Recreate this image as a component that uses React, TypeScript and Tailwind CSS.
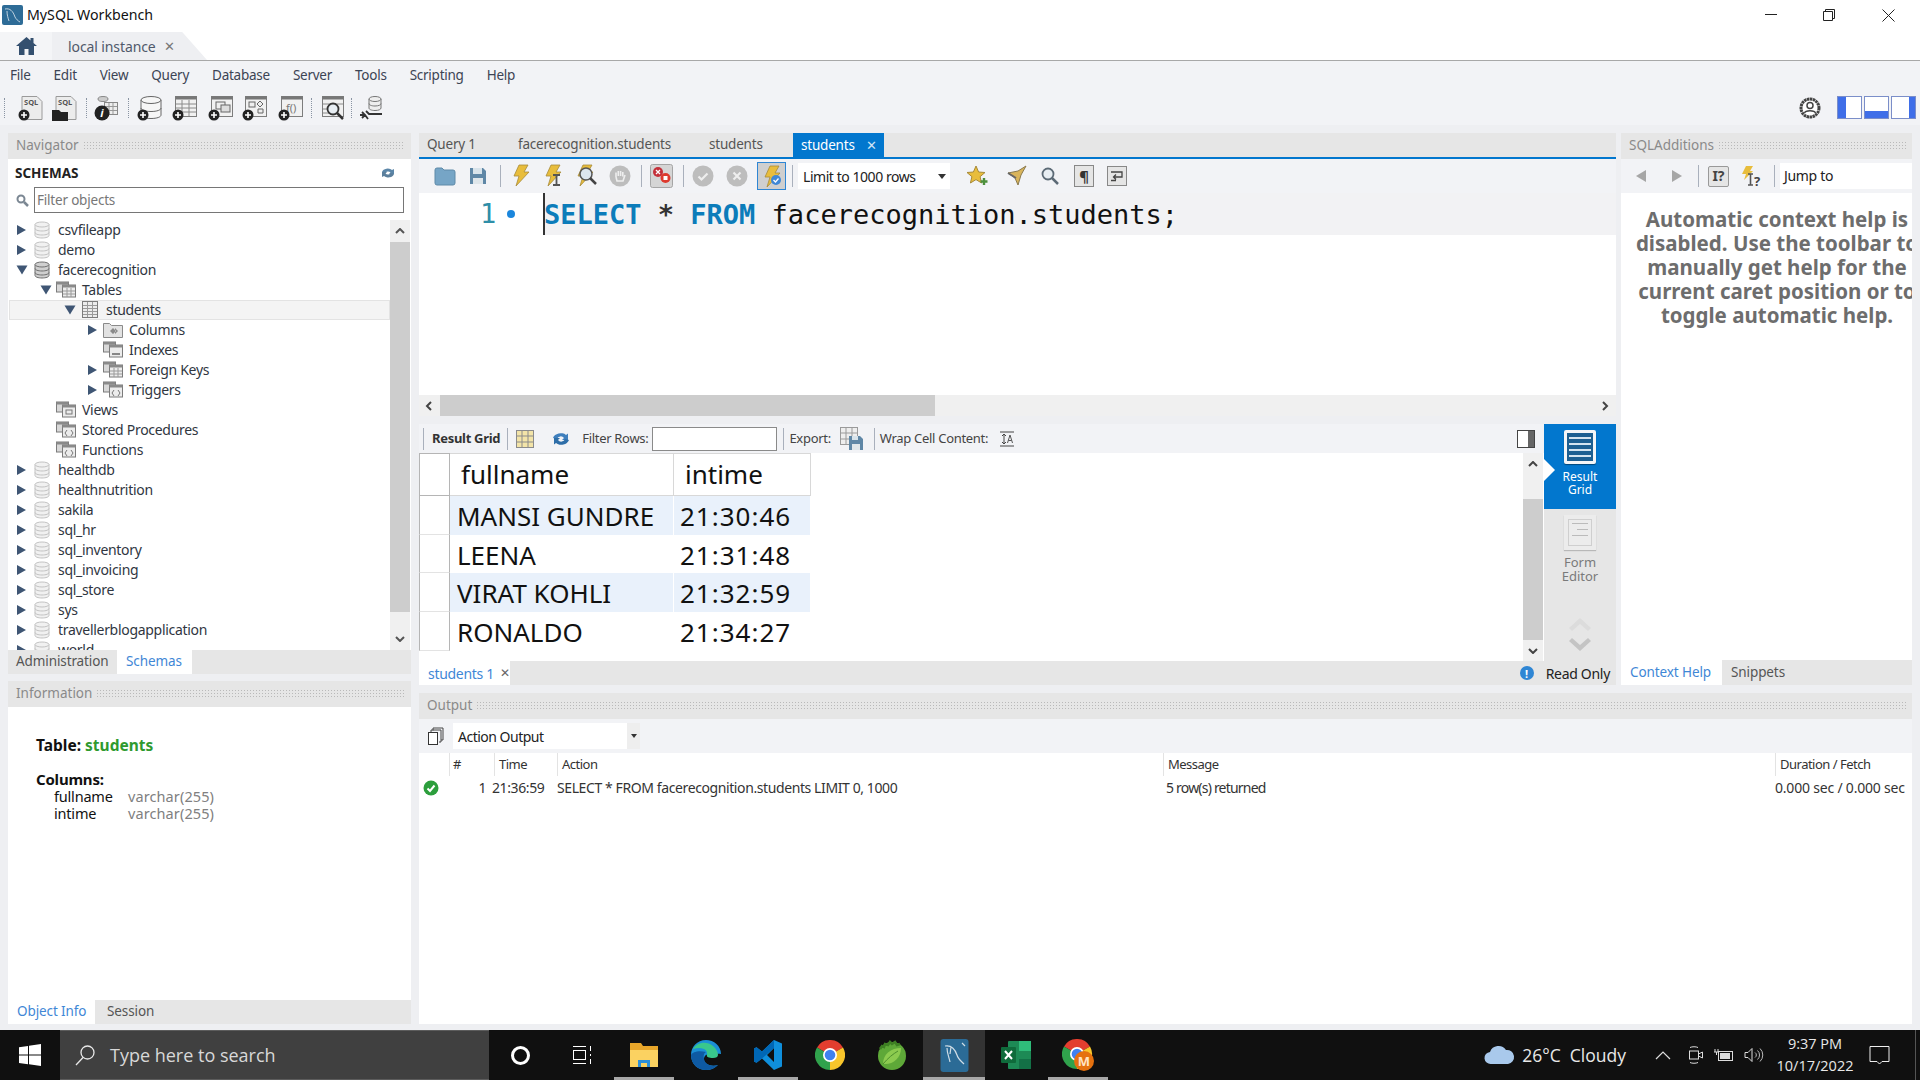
import type { ReactNode } from "react";

// shared bits
const Dots = () => (
    <div className="flex-1 h-[9px] ml-[4px] bg-[radial-gradient(circle,#b9b9b9_1px,transparent_1px)] bg-[length:3px_3px]" />
);

const PanelHeader = ({ title }: { title: string }) => (
    <div className="h-[26px] shrink-0 bg-[#e6e6e6] flex items-center pl-[8px] pr-[6px] pb-[2px] text-[13.5px] text-[#8a8a8a]">
        <span>{title}</span>
        <Dots />
    </div>
);

const Sep = ({ ml, mr }: { ml: string; mr?: string }) => (
    <div className={`w-px h-[22px] bg-[#a9b0bc] shrink-0 ${ml} ${mr ?? ""}`} />
);

const Icon = ({ w = 26, h = 26, children, className = "" }: { w?: number; h?: number; children: ReactNode; className?: string }) => (
    <svg width={w} height={h} viewBox={`0 0 ${w} ${h}`} className={`shrink-0 ${className}`}>
        {children}
    </svg>
);

const Plus = ({ x = 6, y = 20 }: { x?: number; y?: number }) => (
    <g>
        <circle cx={x} cy={y} r="5.5" fill="#222" />
        <path d={`M${x - 3} ${y}h6M${x} ${y - 3}v6`} stroke="#fff" strokeWidth="1.6" />
    </g>
);

const SheetWin = ({ children }: { children?: ReactNode }) => (
    <g>
        <rect x="3.5" y="1.5" width="21" height="20" fill="#f1f1f1" stroke="#7d7d7d" />
        <rect x="3.5" y="1.5" width="21" height="3" fill="#777" />
        {children}
    </g>
);

const Bolt = ({ x = 0 }: { x?: number }) => (
    <path transform={`translate(${x} 0)`} d="M9 2h9l-4 7h5L6 23l3-10H4z" fill="#e8bd3c" stroke="#a78a3a" strokeWidth="0.8" />
);

const Triangle = ({ open }: { open?: boolean }) =>
    open ? (
        <svg width="12" height="10" viewBox="0 0 12 10" className="shrink-0">
            <path d="M0.5 0.5h11L6 9.5z" fill="#3f5674" />
        </svg>
    ) : (
        <svg width="12" height="12" viewBox="0 0 12 12" className="shrink-0">
            <path d="M1 1v10l9-5z" fill="#3f5674" />
        </svg>
    );

const DbIcon = ({ dark }: { dark?: boolean }) => {
    const s = dark ? "#6f6f6f" : "#c3c3c3";
    const f = dark ? "#cfcfcf" : "#f1f1f1";
    return (
        <Icon w={16} h={18}>
            <path d="M1 3.5v11c0 1.4 3 2.5 7 2.5s7-1.1 7-2.5v-11" fill={f} stroke={s} />
            <ellipse cx="8" cy="3.5" rx="7" ry="2.5" fill={f} stroke={s} />
            <path d="M1 7.5c0 1.4 3 2.5 7 2.5s7-1.1 7-2.5M1 11.5c0 1.4 3 2.5 7 2.5s7-1.1 7-2.5" fill="none" stroke={s} />
        </Icon>
    );
};

const GroupIcon = ({ kind }: { kind?: string }) => (
    <Icon w={20} h={18}>
        <rect x="0.5" y="1" width="12" height="10" fill="#d8d8d8" stroke="#7b7b7b" />
        <rect x="0.5" y="1" width="12" height="2.5" fill="#8a8a8a" />
        <rect x="6.5" y="4" width="13" height="12" fill="#ececec" stroke="#7b7b7b" />
        <rect x="6.5" y="4" width="13" height="2.5" fill="#8a8a8a" />
        {kind === "grid" && <path d="M7 10h12M7 13h12M11 7v9M15 7v9" stroke="#9a9a9a" />}
        {kind === "code" && <path d="M11 9l-2 3 2 3M15 9l2 3-2 3" fill="none" stroke="#777" />}
        {kind === "view" && <rect x="10" y="9" width="6" height="4" fill="none" stroke="#777" />}
        {kind === "index" && <path d="M9 13h8" stroke="#666" strokeWidth="1.5" />}
    </Icon>
);

const ColumnsIcon = () => (
    <Icon w={20} h={18}>
        <path d="M0.5 2.5h6l2 2h11v12h-19z" fill="#e2e2e2" stroke="#8a8a8a" />
        <path d="M7 10l3-3v6zM13 10l-3-3v6zM12 7l3 3-3 3z" fill="#8a8a8a" />
    </Icon>
);

const TableIcon = () => (
    <Icon w={17} h={18}>
        <rect x="0.5" y="0.5" width="15" height="16" fill="#ececec" stroke="#7c7c7c" />
        <path d="M1 4.5h14M1 7.5h14M1 10.5h14M1 13.5h14M5.5 1v15M10.5 1v15" stroke="#9a9a9a" />
    </Icon>
);

type Row = { label: string; depth: number; arrow?: "open" | "closed"; icon: "db" | "dbDark" | "grid" | "table" | "cols" | "index" | "fk" | "trig" | "view" | "code"; active?: boolean };

const rows: Row[] = [
    { label: "csvfileapp", depth: 0, arrow: "closed", icon: "db" },
    { label: "demo", depth: 0, arrow: "closed", icon: "db" },
    { label: "facerecognition", depth: 0, arrow: "open", icon: "dbDark" },
    { label: "Tables", depth: 1, arrow: "open", icon: "grid" },
    { label: "students", depth: 2, arrow: "open", icon: "table", active: true },
    { label: "Columns", depth: 3, arrow: "closed", icon: "cols" },
    { label: "Indexes", depth: 3, icon: "index" },
    { label: "Foreign Keys", depth: 3, arrow: "closed", icon: "fk" },
    { label: "Triggers", depth: 3, arrow: "closed", icon: "trig" },
    { label: "Views", depth: 1, icon: "view" },
    { label: "Stored Procedures", depth: 1, icon: "code" },
    { label: "Functions", depth: 1, icon: "code" },
    { label: "healthdb", depth: 0, arrow: "closed", icon: "db" },
    { label: "healthnutrition", depth: 0, arrow: "closed", icon: "db" },
    { label: "sakila", depth: 0, arrow: "closed", icon: "db" },
    { label: "sql_hr", depth: 0, arrow: "closed", icon: "db" },
    { label: "sql_inventory", depth: 0, arrow: "closed", icon: "db" },
    { label: "sql_invoicing", depth: 0, arrow: "closed", icon: "db" },
    { label: "sql_store", depth: 0, arrow: "closed", icon: "db" },
    { label: "sys", depth: 0, arrow: "closed", icon: "db" },
    { label: "travellerblogapplication", depth: 0, arrow: "closed", icon: "db" },
    { label: "world", depth: 0, arrow: "closed", icon: "db" },
];

const indent = ["pl-[7px]", "pl-[31px]", "pl-[55px]", "pl-[78px]"];

function TreeRow({ row }: { row: Row }) {
    const { label, depth, arrow, icon, active } = row;
    return (
        <div className={`h-[20px] shrink-0 flex items-center ${indent[depth]} ${active ? "bg-[#f4f4f4] ring-1 ring-inset ring-[#e3e3e3]" : ""}`}>
            <div className="w-[16px] flex items-center shrink-0">
                {arrow === "open" && <Triangle open />}
                {arrow === "closed" && <Triangle />}
            </div>
            <div className={icon === "db" || icon === "dbDark" || icon === "table" ? "w-[26px] shrink-0 pl-[2px]" : "w-[26px] shrink-0"}>
                {icon === "db" && <DbIcon />}
                {icon === "dbDark" && <DbIcon dark />}
                {icon === "table" && <TableIcon />}
                {icon === "cols" && <ColumnsIcon />}
                {icon === "grid" && <GroupIcon kind="grid" />}
                {icon === "index" && <GroupIcon kind="index" />}
                {icon === "fk" && <GroupIcon kind="grid" />}
                {icon === "trig" && <GroupIcon kind="code" />}
                {icon === "view" && <GroupIcon kind="view" />}
                {icon === "code" && <GroupIcon kind="code" />}
            </div>
            <span className="text-[14px] leading-[20px] tracking-[-0.3px] text-[#30363f] whitespace-nowrap">{label}</span>
        </div>
    );
}

function Navigator() {
    return (
        <div className="w-[403px] shrink-0 flex flex-col">
            <PanelHeader title="Navigator" />
            <div className="bg-white h-[61px] shrink-0 px-[7px] pt-[5px]">
                <div className="flex items-center justify-between pr-[8px] h-[18px]">
                    <span className="text-[13.5px] font-bold text-[#222]">SCHEMAS</span>
                    <Icon w={16} h={14}>
                        <path d="M2 6a6 5 0 0 1 10-2l2-1v5h-5l1.500-1.500A3.500 3 0 0 0 5 7z" fill="#5b86a8" />
                        <path d="M14 8a6 5 0 0 1-10 2l-2 1V6h5L5.500 7.500A3.500 3 0 0 0 11 7z" fill="#5b7f9c" />
                    </Icon>
                </div>
                <div className="flex items-center mt-[5px]">
                    <Icon w={16} h={14} className="mr-[3px] ml-[0px]">
                        <circle cx="6" cy="6" r="3.500" fill="none" stroke="#7b8793" strokeWidth="2" />
                        <path d="M9 9l4 4" stroke="#7b8793" strokeWidth="2.500" />
                    </Icon>
                    <div className="h-[26px] w-[370px] border border-[#767676] bg-white text-[13.5px] tracking-[-0.2px] text-[#777] pl-[2px] leading-[24px]">Filter objects</div>
                </div>
            </div>
            <div className="h-[430px] shrink-0 bg-white flex overflow-hidden">
                <div className="flex-1 flex flex-col overflow-hidden pl-px">
                    {rows.map((r) => (
                        <TreeRow key={r.label} row={r} />
                    ))}
                </div>
                <div className="w-[20px] mr-px shrink-0 flex flex-col bg-[#f0f0f0]">
                    <div className="h-[22px] flex items-center justify-center">
                        <Icon w={10} h={6}>
                            <path d="M1 5l4-4 4 4" fill="none" stroke="#555" strokeWidth="2" />
                        </Icon>
                    </div>
                    <div className="h-[370px] bg-[#cdcdcd]" />
                    <div className="flex-1 flex items-end justify-center pb-[8px]">
                        <Icon w={10} h={6}>
                            <path d="M1 1l4 4 4-4" fill="none" stroke="#555" strokeWidth="2" />
                        </Icon>
                    </div>
                </div>
            </div>
            <div className="h-[24px] shrink-0 bg-[#e6e6e6] flex text-[13.5px] tracking-[-0.1px] leading-[23px]">
                <div className="w-[109px] pl-[8px] text-[#555]">Administration</div>
                <div className="w-[75px] bg-white pl-[9px] text-[#3f87d6]">Schemas</div>
            </div>
            <div className="h-[7px] shrink-0" />
            <PanelHeader title="Information" />
            <div className="flex-1 bg-white pl-[28px] pt-[28px] text-[14.5px] tracking-[-0.2px] text-[#111]">
                <div className="font-bold text-[15.5px] leading-[20px] tracking-normal">
                    Table: <span className="text-[#2f9a2f]">students</span>
                </div>
                <div className="font-bold text-[15px] leading-[18px] mt-[15px]">Columns:</div>
                <div className="flex leading-[16.500px] pl-[18px]">
                    <div className="w-[74px]">
                        <div>fullname</div>
                        <div>intime</div>
                    </div>
                    <div className="text-[#808080] tracking-[0.1px]">
                        <div>varchar(255)</div>
                        <div>varchar(255)</div>
                    </div>
                </div>
            </div>
            <div className="h-[24px] shrink-0 bg-[#e6e6e6] flex text-[13.5px] tracking-[-0.1px] leading-[23px]">
                <div className="w-[87px] bg-white pl-[9px] text-[#3f87d6]">Object Info</div>
                <div className="pl-[12px] text-[#555]">Session</div>
            </div>
        </div>
    );
}

function QueryToolbar() {
    return (
        <div className="h-[34px] shrink-0 bg-[#f2f3f6] flex items-center">
            <Icon w={22} h={20} className="ml-[15px]">
                <path d="M1 4a2 2 0 0 1 2-2h5l2 2h9a2 2 0 0 1 2 2v11a2 2 0 0 1-2 2H3a2 2 0 0 1-2-2z" fill="#76a5c6" stroke="#5e8aa8" />
            </Icon>
            <Icon w={18} h={20} className="ml-[13px]">
                <path d="M1 2h13l3 3v13H1z" fill="#5f87a6" />
                <rect x="4" y="2" width="9" height="6" fill="#d8e3ea" />
                <rect x="4" y="12" width="10" height="6" fill="#dfe6ea" />
            </Icon>
            <Sep ml="ml-[13px]" />
            <Icon w={22} h={26} className="ml-[9px]">
                <Bolt />
            </Icon>
            <Icon w={22} h={26} className="ml-[10px]">
                <Bolt />
                <path d="M11 12h7M14.500 12v10M11 22h7" stroke="#555" strokeWidth="1.800" fill="none" />
            </Icon>
            <Icon w={24} h={26} className="ml-[10px]">
                <Bolt />
                <circle cx="12" cy="11" r="6" fill="#dbe5ee" stroke="#555" strokeWidth="1.500" />
                <path d="M16 15l6 6" stroke="#444" strokeWidth="2.500" />
            </Icon>
            <Icon w={22} h={22} className="ml-[11px]">
                <circle cx="11" cy="11" r="10.500" fill="#bdbdbd" />
                <path d="M7 12V7.500M9.300 11V6M11.600 11V6M13.800 11.500V7M7 12l1 4h6l2-6" stroke="#eee" strokeWidth="1.600" fill="none" />
            </Icon>
            <Sep ml="ml-[10px]" />
            <Icon w={23} h={24} className="ml-[8px]">
                <rect x="0.500" y="0.500" width="22" height="23" rx="2" fill="#d5d5d5" stroke="#a5a5a5" />
                <circle cx="8" cy="8" r="5" fill="#c4303a" />
                <circle cx="15.500" cy="14" r="5" fill="#dd3a2e" />
                <path d="M6 6l4 4M10 6l-4 4" stroke="#fff" strokeWidth="1.300" />
                <rect x="13.500" y="12" width="4" height="4" fill="#fff" />
            </Icon>
            <Sep ml="ml-[10px]" />
            <Icon w={22} h={22} className="ml-[8px]">
                <circle cx="11" cy="11" r="10.500" fill="#bdbdbd" />
                <path d="M6.500 11.500l3 3 6-6" stroke="#eee" strokeWidth="2.200" fill="none" />
            </Icon>
            <Icon w={22} h={22} className="ml-[12px]">
                <circle cx="11" cy="11" r="10.500" fill="#bdbdbd" />
                <path d="M7.500 7.500l7 7M14.500 7.500l-7 7" stroke="#eee" strokeWidth="2.200" />
            </Icon>
            <div className="ml-[9px] w-[29px] h-[28px] border border-[#2f86d4] bg-[#cfcfcf] flex items-center justify-center shrink-0">
                <Icon w={22} h={24}>
                    <Bolt />
                    <circle cx="15" cy="16" r="5" fill="#3f87d6" />
                    <path d="M12.500 16l2 2 3-3.500" stroke="#fff" strokeWidth="1.300" fill="none" />
                </Icon>
            </div>
            <Sep ml="ml-[6px]" />
            <div className="ml-[5px] w-[152px] h-[26px] bg-white flex items-center justify-between pl-[5px] pr-[4px] shrink-0">
                <span className="text-[14px] text-[#222] tracking-[-0.45px]">Limit to 1000 rows</span>
                <Icon w={8} h={5}>
                    <path d="M0 0h8L4 5z" fill="#333" />
                </Icon>
            </div>
            <Icon w={24} h={24} className="ml-[16px]">
                <path d="M10 2l2.600 6 6.400.5-4.900 4.200 1.500 6.300L10 15.600 4.400 19l1.500-6.300L1 8.500 7.400 8z" fill="#e8bd3c" stroke="#a78a3a" />
                <path d="M18 14v7M14.500 17.500h7" stroke="#4d8f3c" strokeWidth="2.400" />
            </Icon>
            <Icon w={22} h={22} className="ml-[16px]">
                <path d="M2 8l10-2 8-5-5 9-3 10-3-7z" fill="#d9b45a" stroke="#8a7a4f" />
                <path d="M2 8l8 5" stroke="#666" strokeWidth="2" />
            </Icon>
            <Icon w={20} h={20} className="ml-[12px]">
                <circle cx="8" cy="8" r="5.500" fill="#e8eef3" stroke="#5c6a76" strokeWidth="1.800" />
                <path d="M12 12l6 6" stroke="#5c6a76" strokeWidth="2.500" />
            </Icon>
            <div className="ml-[14px] w-[20px] h-[22px] border border-[#888] bg-[#e5e5e5] flex items-center justify-center shrink-0 text-[15px] font-bold text-[#333] leading-none">¶</div>
            <div className="ml-[13px] w-[20px] h-[20px] border border-[#888] bg-[#e5e5e5] flex items-center justify-center shrink-0">
                <Icon w={14} h={12}>
                    <path d="M1 2h11v5H4M6 4.500L3.500 7 6 9.500M1 10.500h5" stroke="#444" strokeWidth="1.300" fill="none" />
                </Icon>
            </div>
        </div>
    );
}

function Editor() {
    return (
        <div className="h-[202px] shrink-0 bg-white">
            <div className="h-[42px] flex">
                <div className="w-[124px] flex items-center shrink-0">
                    <span className="ml-[61px] font-['DejaVu_Sans_Mono',monospace] text-[27px] text-[#2f8ea8]">1</span>
                    <div className="ml-[11px] w-[8px] h-[8px] rounded-full bg-[#1b86dc]" />
                </div>
                <div className="flex-1 flex items-center bg-[#f2f2f4] border-l-2 border-[#333] pt-[2px] font-['DejaVu_Sans_Mono',monospace] text-[27px] whitespace-pre text-[#111]">
                    <span className="font-bold text-[#0c7cba] -ml-px">SELECT</span>
                    <span className="font-bold text-[#333]"> * </span>
                    <span className="font-bold text-[#0c7cba]">FROM</span>
                    <span> facerecognition.students;</span>
                </div>
            </div>
        </div>
    );
}

const headCell = "flex items-center border-b border-r border-[#d8d8d8] h-[43px] text-[26px] text-[#111]";

const gridRows = [
    ["MANSI GUNDRE", "21:30:46"],
    ["LEENA", "21:31:48"],
    ["VIRAT KOHLI", "21:32:59"],
    ["RONALDO", "21:34:27"],
];

function ResultGrid() {
    return (
        <div className="flex-1 h-[198px] bg-white overflow-hidden">
            <div className="flex">
                <div className="w-[31px] h-[43px] border-l border-t border-r border-b border-[#b5b5b5] shrink-0" />
                <div className={`w-[224px] pl-[11px] border-t-[#d8d8d8] border-t ${headCell}`}>fullname</div>
                <div className={`w-[137px] pl-[11px] border-t-[#d8d8d8] border-t ${headCell}`}>intime</div>
            </div>
            {gridRows.map((r, i) => (
                <div key={r[0]} className="flex h-[38.700px]">
                    <div className="w-[31px] border-l border-r border-b border-l-[#b5b5b5] border-r-[#b5b5b5] border-b-[#e3e3e3] shrink-0" />
                    <div className={`w-[223px] pl-[7px] pt-[2px] text-[26px] text-[#111] flex items-center mr-px ${i % 2 === 0 ? "bg-[#e9f1fb]" : ""}`}>{r[0]}</div>
                    <div className={`w-[136px] pl-[6px] pt-[2px] text-[26px] tracking-[1px] text-[#111] flex items-center ${i % 2 === 0 ? "bg-[#e9f1fb]" : ""}`}>{r[1]}</div>
                </div>
            ))}
        </div>
    );
}

function ResultToolbar() {
    return (
        <div className="h-[29px] shrink-0 bg-[#f2f3f6] flex items-center text-[13px] text-[#444] tracking-[-0.3px]">
            <Sep ml="ml-[4px]" />
            <span className="ml-[8px] font-bold text-[#333]">Result Grid</span>
            <Sep ml="ml-[7px]" />
            <Icon w={18} h={18} className="ml-[8px]">
                <rect x="0.500" y="0.500" width="17" height="17" fill="#f3e4a8" stroke="#8b8b8b" />
                <path d="M6 1v16M12 1v16M1 6h16M1 12h16" stroke="#8b8b8b" />
            </Icon>
            <Icon w={20} h={18} className="ml-[17px]">
                <path d="M2 8a8 7 0 0 1 13-3l2-1.500V10h-6l2-2a4 4 0 0 0-7 1z" fill="#3f7fbd" />
                <path d="M18 10a8 7 0 0 1-13 3l-2 1.500V8h6L7 10a4 4 0 0 0 7-1z" fill="#2e6ea8" />
            </Icon>
            <span className="ml-[11px]">Filter Rows:</span>
            <div className="ml-[4px] w-[125px] h-[24px] border border-[#8a8a8a] bg-white shrink-0" />
            <Sep ml="ml-[6px]" />
            <span className="ml-[5px]">Export:</span>
            <Icon w={24} h={24} className="ml-[9px]">
                <rect x="0.500" y="0.500" width="17" height="17" fill="#eee" stroke="#9a9a9a" />
                <path d="M6 1v16M12 1v16M1 6h16M1 12h16" stroke="#9a9a9a" />
                <path d="M9 9h11l3 3v11H9z" fill="#5f87a6" />
                <rect x="12" y="9" width="6" height="4" fill="#d8e3ea" />
                <rect x="12" y="17" width="8" height="6" fill="#dfe6ea" />
            </Icon>
            <Sep ml="ml-[10px]" />
            <span className="ml-[5px]">Wrap Cell Content:</span>
            <Icon w={14} h={16} className="ml-[12px]">
                <path d="M0 1h14M0 15h14M4 3v10M2 5l2-2 2 2M2 11l2 2 2-2" stroke="#444" fill="none" />
                <path d="M7.500 12l2.500-8 2.500 8M8.500 9.500h3" stroke="#555" fill="none" />
            </Icon>
            <div className="ml-auto mr-[9px] w-[18px] h-[18px] border border-[#444] flex">
                <div className="w-[10px] bg-white" />
                <div className="flex-1 bg-[#666]" />
            </div>
        </div>
    );
}

function SideColumn() {
    return (
        <div className="w-[72px] shrink-0 bg-[#e6e6e6] flex flex-col items-center relative">
            <div className="w-full h-[85px] bg-[#0277ce] flex flex-col items-center pt-[6px] relative">
                <div className="w-[32px] h-[34px] bg-[#f4f6f8] rounded-[2px] p-[3px] shadow-[0_1px_1px_rgba(0,0,0,0.4)]">
                    <div className="w-full h-full bg-[#1d5f91] flex flex-col justify-around px-[2px] py-[2px]">
                        <div className="h-[2px] bg-[#d5e4ef]" />
                        <div className="h-[2px] bg-[#d5e4ef]" />
                        <div className="h-[2px] bg-[#d5e4ef]" />
                        <div className="h-[2px] bg-[#d5e4ef]" />
                    </div>
                </div>
                <div className="text-[12px] leading-[13px] text-white text-center mt-[6px]">
                    Result
                    <br />
                    Grid
                </div>
                <div className="absolute left-0 top-[35px] w-0 h-0 border-y-[11px] border-y-transparent border-l-[11px] border-l-white" />
            </div>
            <div className="w-[32px] h-[35px] bg-[#ececec] mt-[6px] p-[4px] shadow-[0_1px_1px_rgba(0,0,0,0.2)]">
                <div className="w-full h-full border border-[#cfcfcf] flex flex-col gap-[5px] p-[3px]">
                    <div className="h-px bg-[#bbb]" />
                    <div className="h-px bg-[#bbb] ml-[5px]" />
                    <div className="h-px bg-[#bbb]" />
                </div>
            </div>
            <div className="text-[13px] leading-[14px] text-[#7a7a7a] text-center mt-[5px]">
                Form
                <br />
                Editor
            </div>
            <Icon w={26} h={40} className="mt-[32px]">
                <path d="M2 13L13 3l11 10-3 3-8-7-8 7z" fill="#dcdcdc" />
                <path d="M2 26l11 10 11-10-3-3-8 7-8-7z" fill="#c4c4c4" />
            </Icon>
        </div>
    );
}

function CenterPanel() {
    return (
        <div className="w-[1197px] shrink-0 flex flex-col">
            <div className="h-[24px] shrink-0 bg-[#e6e6e6] flex text-[13.5px] tracking-[-0.2px] leading-[23px] text-[#555]">
                <div className="pl-[8px] w-[90px]">Query 1</div>
                <div className="w-[191px] pl-[9px]">facerecognition.students</div>
                <div className="w-[93px] pl-[9px]">students</div>
                <div className="w-[91px] bg-[#0277ce] text-white pl-[8px] flex items-center">
                    students
                    <span className="ml-[11px] text-[#cfe4f5] text-[13px] leading-none">✕</span>
                </div>
            </div>
            <div className="h-[2px] bg-[#0277ce] shrink-0" />
            <QueryToolbar />
            <Editor />
            <div className="h-[21px] shrink-0 bg-[#f0f0f0] flex items-center">
                <Icon w={20} h={10}>
                    <path d="M12 1L8 5l4 4" fill="none" stroke="#444" strokeWidth="2" />
                </Icon>
                <div className="w-[495px] h-full bg-[#cdcdcd] ml-px" />
                <Icon w={20} h={10} className="ml-auto mr-px">
                    <path d="M8 1l4 4-4 4" fill="none" stroke="#444" strokeWidth="2" />
                </Icon>
            </div>
            <div className="h-[8px] shrink-0" />
            <div className="h-[237px] shrink-0 flex">
                <div className="flex-1 flex flex-col">
                    <ResultToolbar />
                    <div className="flex-1 flex bg-white">
                        <ResultGrid />
                        <div className="w-[20px] mr-px shrink-0 bg-[#f0f0f0] flex flex-col">
                            <div className="h-[46px] flex justify-center pt-[8px]">
                                <Icon w={10} h={6}>
                                    <path d="M1 5l4-4 4 4" fill="none" stroke="#444" strokeWidth="2" />
                                </Icon>
                            </div>
                            <div className="h-[141px] bg-[#cdcdcd]" />
                            <div className="flex-1 flex justify-center items-center">
                                <Icon w={10} h={6}>
                                    <path d="M1 1l4 4 4-4" fill="none" stroke="#444" strokeWidth="2" />
                                </Icon>
                            </div>
                        </div>
                    </div>
                </div>
                <SideColumn />
            </div>
            <div className="h-[24px] shrink-0 bg-[#e6e6e6] flex items-center text-[14px]">
                <div className="w-[91px] h-full bg-white pl-[9px] text-[#3f87d6] flex items-center whitespace-nowrap tracking-[-0.3px]">
                    students 1<span className="ml-[6px] text-[#666] text-[12px]">✕</span>
                </div>
                <div className="ml-auto w-[14px] h-[14px] rounded-full bg-[#2f86d4] text-white text-[11px] font-bold flex items-center justify-center leading-none">!</div>
                <span className="ml-[12px] mr-[6px] text-[#222] tracking-[-0.3px]">Read Only</span>
            </div>
        </div>
    );
}

function SqlAdditions() {
    return (
        <div className="w-[291px] shrink-0 ml-[5px] flex flex-col">
            <PanelHeader title="SQLAdditions" />
            <div className="h-[34px] shrink-0 bg-[#f2f3f6] flex items-center">
                <Icon w={12} h={14} className="ml-[14px]">
                    <path d="M11 1v12L1 7z" fill="#a6a6a6" />
                </Icon>
                <Icon w={12} h={14} className="ml-[24px]">
                    <path d="M1 1v12l10-6z" fill="#a6a6a6" />
                </Icon>
                <Sep ml="ml-[15px]" />
                <div className="ml-[9px] w-[21px] h-[21px] border border-[#999] rounded-[2px] bg-[#e5e5e5] flex items-center justify-center text-[14px] font-bold text-[#444] leading-none">I?</div>
                <Icon w={22} h={22} className="ml-[12px]">
                    <path d="M5 1h7L9 6h3L3 15l2-6H1z" fill="#e8bd3c" />
                    <path d="M7 9h5M9.500 9v11M7 20h5" stroke="#555" strokeWidth="1.600" />
                    <text x="13" y="21" fontSize="13" fontWeight="700" fill="#444">?</text>
                </Icon>
                <Sep ml="ml-[11px]" />
                <div className="ml-[5px] w-[133px] h-[26px] bg-white pl-[4px] text-[14px] leading-[26px] text-[#222] tracking-[-0.3px]">Jump to</div>
            </div>
            <div className="flex-1 bg-white overflow-hidden">
                <div className="w-[312px] pt-[14px] text-center text-[20.500px] leading-[24px] font-bold text-[#6d6d6d] whitespace-nowrap">
                    Automatic context help is
                    <br />
                    disabled. Use the toolbar to
                    <br />
                    manually get help for the
                    <br />
                    current caret position or to
                    <br />
                    toggle automatic help.
                </div>
            </div>
            <div className="h-[25px] shrink-0 bg-[#e6e6e6] flex text-[13.5px] tracking-[-0.1px] leading-[24px]">
                <div className="w-[101px] bg-white pl-[9px] text-[#3f87d6]">Context Help</div>
                <div className="pl-[9px] text-[#555]">Snippets</div>
            </div>
        </div>
    );
}

function OutputPanel() {
    return (
        <div className="flex-1 flex flex-col min-h-0">
            <PanelHeader title="Output" />
            <div className="h-[34px] shrink-0 bg-[#f2f3f6] flex items-center">
                <Icon w={18} h={18} className="ml-[8px]">
                    <path d="M6 3.500V1h10v12h-2" fill="none" stroke="#444" />
                    <path d="M4 5.500V3h10v12h-2" fill="none" stroke="#444" />
                    <rect x="1.500" y="5.500" width="9" height="12" fill="#fff" stroke="#333" />
                </Icon>
                <div className="ml-[8px] w-[187px] h-[26px] bg-white flex items-center pl-[5px] text-[14px] tracking-[-0.5px] text-[#222] relative">
                    Action Output
                    <div className="absolute right-0 top-0 w-[13px] h-full bg-[#eee] flex items-center justify-center">
                        <Icon w={6} h={4}>
                            <path d="M0 0h6L3 4z" fill="#333" />
                        </Icon>
                    </div>
                </div>
            </div>
            <div className="flex-1 bg-white text-[#333]">
                <div className="h-[23px] flex items-center text-[13px] tracking-[-0.5px]">
                    <div className="w-[30px] shrink-0" />
                    <div className="w-[45px] h-full border-l border-[#e3e3e3] pl-[3px] leading-[23px]">#</div>
                    <div className="w-[63px] h-full border-l border-[#e3e3e3] pl-[4px] leading-[23px]">Time</div>
                    <div className="w-[606px] h-full border-l border-[#e3e3e3] pl-[4px] leading-[23px]">Action</div>
                    <div className="w-[612px] h-full border-l border-[#e3e3e3] pl-[4px] leading-[23px]">Message</div>
                    <div className="flex-1 h-full border-l border-[#e3e3e3] pl-[4px] leading-[23px]">Duration / Fetch</div>
                </div>
                <div className="h-[23px] flex items-center text-[14px] tracking-[-0.4px]">
                    <div className="w-[30px] pl-[4px] shrink-0">
                        <Icon w={16} h={16} className="block">
                            <circle cx="8" cy="8" r="7.500" fill="#2c9e3c" />
                            <path d="M4.500 8.500l2.500 2.500 4.500-5.500" stroke="#fff" strokeWidth="2" fill="none" />
                        </Icon>
                    </div>
                    <div className="w-[37px] text-right">1</div>
                    <div className="w-[69px] pl-[6px]">21:36:59</div>
                    <div className="w-[611px] pl-[2px]">SELECT * FROM facerecognition.students LIMIT 0, 1000</div>
                    <div className="w-[608px] tracking-[-0.8px]">5 row(s) returned</div>
                    <div className="pl-[1px] tracking-[-0.2px]">0.000 sec / 0.000 sec</div>
                </div>
            </div>
        </div>
    );
}

function Taskbar() {
    const bar = "absolute bottom-0 left-[1px] right-[1px] h-[3px] bg-[#a8a8a8]";
    return (
        <div className="h-[50px] shrink-0 bg-[#101010] flex items-stretch text-white">
            <div className="w-[60px] flex items-center justify-center shrink-0">
                <Icon w={22} h={22}>
                    <path d="M0 3.200l9-1.300v8.600H0zM10 1.800L22 0v10.500H10zM0 11.500h9v8.700l-9-1.300zM10 11.500h12V22l-12-1.800z" fill="#fff" />
                </Icon>
            </div>
            <div className="w-[429px] shrink-0 bg-[#404040] border-t border-b border-[#5c5c5c] flex items-center font-['Open_Sans',sans-serif] text-[18px] text-[#d8d8d8]">
                <Icon w={22} h={22} className="ml-[14px]">
                    <circle cx="13.500" cy="8.500" r="6.500" fill="none" stroke="#e8e8e8" strokeWidth="1.300" />
                    <path d="M9 13.500L2 21" stroke="#e8e8e8" strokeWidth="1.300" />
                </Icon>
                <span className="ml-[14px]">Type here to search</span>
            </div>
            <div className="w-[62px] flex items-center justify-center shrink-0">
                <div className="w-[19px] h-[19px] rounded-full border-[3px] border-white" />
            </div>
            <div className="w-[62px] flex items-center justify-center shrink-0">
                <Icon w={20} h={20}>
                    <path d="M1 1.500h13M1 18.500h13M18.500 1v5M18.500 14v5M18.500 9v2" stroke="#fff" />
                    <rect x="1.500" y="5.500" width="12" height="9" fill="none" stroke="#fff" />
                </Icon>
            </div>
            <div className="w-[62px] flex items-center justify-center shrink-0 relative">
                <Icon w={30} h={28}>
                    <path d="M1 2h11l2 3h15v21H1z" fill="#e8a62a" />
                    <rect x="1" y="9" width="28" height="17" fill="#fbd261" />
                    <path d="M9 19h12v7h-3v-4h-6v4H9z" fill="#2c8fd8" />
                </Icon>
                <div className={bar} />
            </div>
            <div className="w-[62px] flex items-center justify-center shrink-0">
                <Icon w={30} h={30}>
                    <path d="M15 0C6 0 0 7 0 15c0 9 7 15 15 15 5 0 9-2 12-5-3 1-8 1-11-1-3-2-4-5-2-8 2-3 16-2 16-2C30 6 23 0 15 0z" fill="#1b8fd6" />
                    <path d="M2 9c3-6 13-9 20-3 4 3 5 7 5 9 0 2-2 3-5 3-4 0-7-1-6-3 1-4-3-9-14-6z" fill="#39c78c" />
                    <path d="M0 15c0 9 7 15 15 15 5 0 9-2 12-5-6 2-13 0-14-6-1-3 0-6 2-7C8 10 1 12 0 15z" fill="#0e5aa3" />
                </Icon>
            </div>
            <div className="w-[62px] flex items-center justify-center shrink-0 relative">
                <Icon w={30} h={30}>
                    <path d="M21 0l8 3.500v23L21 30 9 18.500l-5.500 4.300L1 21.500v-13l2.500-1.300L9 11.500zM21 8l-7 7 7 7z" fill="#0f8fdc" />
                    <path d="M21 0L9 11.500 3.500 7.200 1 8.500v13l2.500 1.300L9 18.500 21 8z" fill="#0067b5" />
                </Icon>
                <div className={bar} />
            </div>
            <div className="w-[62px] flex items-center justify-center shrink-0">
                <Icon w={30} h={30}>
                    <path d="M15 15L2 7.500A15 15 0 0 1 28 7.500z" fill="#e33e2f" />
                    <path d="M15 15L28 7.500A15 15 0 0 1 15 30z" fill="#f8c52b" />
                    <path d="M15 15L15 30A15 15 0 0 1 2 7.500z" fill="#30a24c" />
                    <circle cx="15" cy="15" r="7" fill="#fff" />
                    <circle cx="15" cy="15" r="5.300" fill="#3f81f0" />
                </Icon>
            </div>
            <div className="w-[62px] flex items-center justify-center shrink-0">
                <Icon w={30} h={32}>
                    <circle cx="15" cy="17" r="14" fill="#5ea838" />
                    <path d="M3 10l2-3 2 1 1-3 3 1 2-3 2 2 3-2 2 3 3-1" fill="none" stroke="#3e7f23" strokeWidth="2.500" />
                    <path d="M6 25c10 1 18-6 18-16-10 0-18 6-18 16z" fill="#8ccb4f" />
                    <path d="M6 25c5-6 10-10 15-13" stroke="#4d8f2d" fill="none" />
                </Icon>
            </div>
            <div className="w-[62px] flex items-center justify-center shrink-0 bg-[#333] relative">
                <Icon w={29} h={35}>
                    <rect x="0.500" y="1" width="28" height="33" rx="3" fill="#2b6b96" />
                    <path d="M5 8c6-1 10 3 12 9 1 4 4 6 7 9M7 10c0 5 2 9 3 14M11 9l-1 7M22 5l3 3" fill="none" stroke="#cfdde6" strokeWidth="1.200" />
                </Icon>
                <div className="absolute bottom-0 inset-x-0 h-[3px] bg-[#a8a8a8]" />
            </div>
            <div className="w-[62px] flex items-center justify-center shrink-0">
                <Icon w={30} h={30}>
                    <rect x="7" y="1" width="23" height="28" rx="1" fill="#1d8a55" />
                    <rect x="18" y="1" width="12" height="10" fill="#2fbd7a" />
                    <rect x="18" y="19" width="12" height="10" fill="#137046" />
                    <rect x="0" y="7" width="15" height="16" rx="1" fill="#0f6b3b" />
                    <path d="M4 11l7 8M11 11l-7 8" stroke="#fff" strokeWidth="2" />
                </Icon>
            </div>
            <div className="w-[62px] flex items-center justify-center shrink-0 relative">
                <Icon w={32} h={32}>
                    <path d="M15 15L2 7.500A15 15 0 0 1 28 7.500z" fill="#e33e2f" />
                    <path d="M15 15L28 7.500A15 15 0 0 1 15 30z" fill="#f8c52b" />
                    <path d="M15 15L15 30A15 15 0 0 1 2 7.500z" fill="#30a24c" />
                    <circle cx="15" cy="15" r="7" fill="#fff" />
                    <circle cx="15" cy="15" r="5.300" fill="#3f81f0" />
                    <circle cx="22" cy="22" r="10" fill="#e5710f" />
                    <text x="22" y="27" textAnchor="middle" fontSize="13" fontWeight="700" fill="#ffe3c4">M</text>
                </Icon>
                <div className={bar} />
            </div>
            <div className="flex-1 flex items-center justify-end font-['Open_Sans',sans-serif]">
                <Icon w={31} h={20}>
                    <path d="M7 19a6 6 0 0 1-1-12 9 9 0 0 1 16-2 7 7 0 0 1 2 14z" fill="#a9c9ec" />
                </Icon>
                <span className="ml-[7px] text-[17.500px] text-[#e8e8e8] whitespace-pre">26°C  Cloudy</span>
                <Icon w={16} h={10} className="ml-[29px]">
                    <path d="M1 9l7-7 7 7" fill="none" stroke="#ddd" strokeWidth="1.200" />
                </Icon>
                <Icon w={16} h={20} className="ml-[17px]">
                    <rect x="1.500" y="6" width="9" height="8" fill="none" stroke="#ddd" />
                    <path d="M10.500 9l4-2v6l-4-2M2 2.500c2-1 6-1 8 0M2 17.500c2 1 6 1 8 0" fill="none" stroke="#ddd" />
                </Icon>
                <Icon w={21} h={14} className="ml-[9px]">
                    <rect x="5.500" y="3.500" width="14" height="9" fill="none" stroke="#ddd" />
                    <rect x="7" y="5" width="10" height="6" fill="#ddd" />
                    <path d="M1 4h5M2 1v3M5 1v3M3.500 4v3" stroke="#ddd" />
                </Icon>
                <Icon w={20} h={16} className="ml-[10px]">
                    <path d="M1 5.500h3l4-4v13l-4-4H1z" fill="none" stroke="#ddd" />
                    <path d="M11 5.500a3 3 0 0 1 0 5M13.500 3.500a6 6 0 0 1 0 9M16 1.500a9 9 0 0 1 0 13" fill="none" stroke="#bbb" />
                </Icon>
                <div className="ml-[8px] w-[86px] text-center text-[14.500px] leading-[22px] text-[#e8e8e8]">
                    9:37 PM
                    <br />
                    10/17/2022
                </div>
                <Icon w={21} h={20} className="ml-[11px]">
                    <path d="M1 1.500h19v15h-7l-2.500 2.500L8 16.500H1z" fill="none" stroke="#eee" />
                </Icon>
                <div className="ml-[25px] w-px h-full bg-[#555] mr-[4px]" />
            </div>
        </div>
    );
}

const menuItems = ["File", "Edit", "View", "Query", "Database", "Server", "Tools", "Scripting", "Help"];

export default function App() {
    return (
        <div className="w-[1920px] h-[1080px] flex flex-col overflow-hidden bg-[#eeeff2] font-['Noto_Sans',sans-serif]">
            {/* Title bar */}
            <div className="h-[30px] shrink-0 bg-white flex items-center">
                <Icon w={21} h={21} className="ml-[2px]">
                    <rect x="0" y="0" width="21" height="20" rx="2" fill="#2e6c97" />
                    <path d="M3 4c5-1 8 2 10 8 1 2 3 4 5 5M5 6c0 4 1 7 2 10" fill="none" stroke="#cfdde6" strokeWidth="0.900" />
                </Icon>
                <span className="ml-[4px] text-[14.200px] text-[#111]">MySQL Workbench</span>
                <div className="ml-auto flex items-center">
                    <Icon w={12} h={2}>
                        <rect width="12" height="1" fill="#222" />
                    </Icon>
                    <Icon w={12} h={12} className="ml-[46px]">
                        <path d="M2.500 2.500V.5h9v9h-2M.5 2.500h9v9h-9z" fill="none" stroke="#222" />
                    </Icon>
                    <Icon w={13} h={13} className="ml-[47px] mr-[25px]">
                        <path d="M.5.5l12 12M12.500.5l-12 12" stroke="#222" />
                    </Icon>
                </div>
            </div>

            {/* Connection tabs */}
            <div className="h-[31px] shrink-0 bg-white border-b border-[#a8a8a8] flex items-end">
                <div className="w-[52px] h-[28px] bg-[#f4f5f7] flex items-center justify-center">
                    <Icon w={21} h={18}>
                        <path d="M10.500 0L0 9h3v9h5.500v-6h4v6H18V9h3l-3.500-3V1h-3v2.500z" fill="#34506f" />
                    </Icon>
                </div>
                <div className="w-[155px] h-[28px] bg-[#eeeff2] flex items-center pl-[16px] text-[14px] tracking-[-0.1px] text-[#50596a] [clip-path:polygon(0_0,84%_0,100%_100%,0_100%)]">
                    local instance
                    <span className="ml-[8px] text-[13px] text-[#777] leading-none">✕</span>
                </div>
            </div>

            {/* Menu */}
            <div className="h-[29px] shrink-0 bg-[#f2f3f6] flex items-center pl-[10px] pb-[1px] gap-[23px] text-[13.5px] tracking-[-0.25px] text-[#3c4454]">
                {menuItems.map((m) => (
                    <span key={m}>{m}</span>
                ))}
            </div>

            {/* Main toolbar */}
            <div className="h-[35px] shrink-0 bg-[#f2f3f6] flex items-center">
                <div className="ml-[4px] w-px h-[20px] border-l border-dotted border-[#8a94a3]" />
                <Icon className="ml-[13px]">
                    <path d="M4 1.500h15l5 5v18H4z" fill="#ececec" stroke="#9a9a9a" />
                    <text x="6" y="10" fontSize="7.500" fontWeight="700" fill="#555">SQL</text>
                    <Plus />
                </Icon>
                <Icon className="ml-[8px]">
                    <path d="M4 1.500h15l5 5v18H4z" fill="#ececec" stroke="#9a9a9a" />
                    <text x="6" y="10" fontSize="7.500" fontWeight="700" fill="#555">SQL</text>
                    <path d="M0 15h7l2 2h7v9H0z" fill="#222" />
                </Icon>
                <div className="ml-[8px] w-px h-[20px] border-l border-dotted border-[#8a94a3]" />
                <Icon className="ml-[7px]">
                    <ellipse cx="9" cy="4" rx="5" ry="2.500" fill="#ccc" stroke="#888" />
                    <rect x="10.500" y="7.500" width="13" height="12" fill="#eee" stroke="#888" />
                    <path d="M11 11.500h12M11 15.500h12M15 8v11M19 8v11" stroke="#999" />
                    <circle cx="8" cy="18" r="7.500" fill="#222" />
                    <text x="8" y="22" textAnchor="middle" fontSize="11" fontWeight="700" fontStyle="italic" fill="#fff">i</text>
                </Icon>
                <div className="ml-[8px] w-px h-[20px] border-l border-dotted border-[#8a94a3]" />
                <Icon className="ml-[8px]">
                    <path d="M4 5v15c0 2 4 3.500 10 3.500s10-1.500 10-3.500V5" fill="#f6f6f6" stroke="#666" />
                    <ellipse cx="14" cy="5" rx="10" ry="3.500" fill="#f6f6f6" stroke="#666" />
                    <path d="M4 13c0 2 4 3.500 10 3.500s10-1.500 10-3.500" fill="none" stroke="#666" />
                    <Plus />
                </Icon>
                <Icon className="ml-[9px]">
                    <SheetWin>
                        <path d="M4 9h20M4 13h20M4 17h20M10 5v16M17 5v16" stroke="#8a8a8a" />
                    </SheetWin>
                    <Plus />
                </Icon>
                <Icon className="ml-[10px]">
                    <SheetWin>
                        <rect x="8" y="7" width="9" height="7" fill="#eee" stroke="#666" />
                        <rect x="13" y="10" width="9" height="7" fill="#ddd" stroke="#666" />
                    </SheetWin>
                    <Plus />
                </Icon>
                <Icon className="ml-[8px]">
                    <SheetWin>
                        <rect x="7" y="7" width="6" height="5" fill="#eee" stroke="#666" />
                        <path d="M18 6l3 3-3 3-3-3zM16 14h5v4h-5z" fill="#eee" stroke="#666" />
                    </SheetWin>
                    <Plus />
                </Icon>
                <Icon className="ml-[10px]">
                    <SheetWin>
                        <text x="8" y="17" fontSize="11" fill="#777">f()</text>
                    </SheetWin>
                    <Plus />
                </Icon>
                <div className="ml-[7px] w-px h-[20px] border-l border-dotted border-[#8a94a3]" />
                <Icon className="ml-[7px]">
                    <SheetWin>
                        <path d="M4 9h20M4 14h6M4 18h6" stroke="#8a8a8a" />
                    </SheetWin>
                    <circle cx="14" cy="14" r="5.500" fill="#e8eef3" stroke="#333" strokeWidth="1.800" />
                    <path d="M18 18l6 6" stroke="#333" strokeWidth="2.500" />
                </Icon>
                <div className="ml-[6px] w-px h-[20px] border-l border-dotted border-[#8a94a3]" />
                <Icon className="ml-[7px]">
                    <path d="M10 4v9c0 1.500 2.500 2.500 6 2.500s6-1 6-2.500V4" fill="#eee" stroke="#777" />
                    <ellipse cx="16" cy="4" rx="6" ry="2.500" fill="#eee" stroke="#777" />
                    <path d="M10 8.500c0 1.500 2.500 2.500 6 2.500s6-1 6-2.500" fill="none" stroke="#777" />
                    <path d="M1 20h5l3 4M3 17l3 3-3 3M23 19H10l-3-3" fill="none" stroke="#333" strokeWidth="1.800" />
                </Icon>
                <div className="ml-auto flex items-center">
                    <Icon w={22} h={22}>
                        <circle cx="11" cy="11" r="9" fill="#fff" stroke="#444" strokeWidth="3" strokeDasharray="2.500 0.500" />
                        <circle cx="11" cy="8.500" r="3" fill="none" stroke="#444" strokeWidth="1.500" />
                        <path d="M5.500 16c1-3 10-3 11 0" fill="none" stroke="#444" strokeWidth="1.500" />
                    </Icon>
                    <div className="ml-[16px] w-[25px] h-[23px] border border-[#7b8ec9] bg-white flex">
                        <div className="w-[8px] bg-[#3f6ee8]" />
                    </div>
                    <div className="ml-[2px] w-[25px] h-[23px] border border-[#7b8ec9] bg-white flex flex-col justify-end">
                        <div className="h-[7px] bg-[#3f6ee8]" />
                    </div>
                    <div className="ml-[2px] mr-[4px] w-[25px] h-[23px] border border-[#7b8ec9] bg-white flex justify-end">
                        <div className="w-[6px] bg-[#3f6ee8]" />
                    </div>
                </div>
            </div>

            {/* Panels */}
            <div className="h-[905px] shrink-0 flex pt-[8px] pl-[8px] pr-[8px] pb-[6px]">
                <Navigator />
                <div className="ml-[8px] flex-1 flex flex-col min-w-0">
                    <div className="h-[552px] shrink-0 flex">
                        <CenterPanel />
                        <SqlAdditions />
                    </div>
                    <div className="h-[8px] shrink-0" />
                    <OutputPanel />
                </div>
            </div>

            <Taskbar />
        </div>
    );
}
